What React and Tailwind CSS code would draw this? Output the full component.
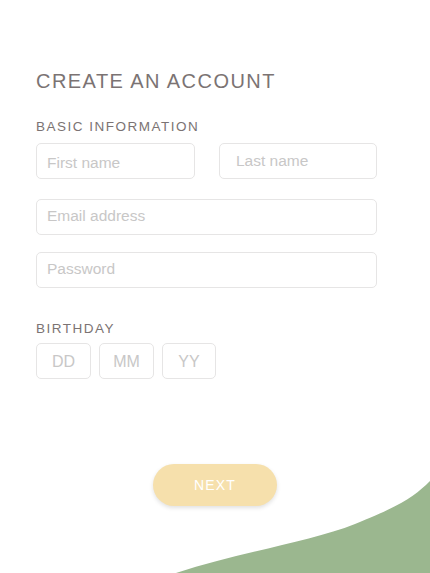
const Field = ({ placeholder, className = "" }) => {
  return (
    <div
      className={`h-[36px] rounded-[5px] border border-[#e6e5e5] bg-white flex items-center text-[#c8c7c7] ${className}`}
    >
      {placeholder}
    </div>
  );
};

const App = () => {
  return (
    <div
      className="relative w-[430px] h-[573px] overflow-hidden bg-white"
      style={{ fontFamily: '"Liberation Sans", Arial, sans-serif' }}
    >
      <div className="px-[36px] pt-[67px]">
        <h1 className="text-[20px] leading-[28px] tracking-[1.45px] text-[#7b7373]">
          CREATE AN ACCOUNT
        </h1>

        <h2 className="mt-[24px] text-[13.5px] leading-[16px] tracking-[1.5px] text-[#7b7373]">
          BASIC INFORMATION
        </h2>
        <div className="mt-[8px] flex gap-[24px] w-[341px]">
          <Field placeholder="First name" className="w-[159px] pl-[10px] pt-[3px] text-[15.5px]" />
          <Field placeholder="Last name" className="w-[158px] pl-[16px] text-[15.5px]" />
        </div>
        <Field placeholder="Email address" className="mt-[20px] w-[341px] pl-[10px] pb-[2px] text-[15.5px]" />
        <Field placeholder="Password" className="mt-[17px] w-[341px] pl-[10px] pb-[2px] text-[15.5px]" />

        <h2 className="mt-[33px] text-[13.5px] leading-[16px] tracking-[1.5px] text-[#7b7373]">
          BIRTHDAY
        </h2>
        <div className="mt-[6px] flex gap-[8px]">
          <Field placeholder="DD" className="w-[55px] justify-center pt-[1px] text-[16px]" />
          <Field placeholder="MM" className="w-[55px] justify-center pt-[1px] text-[16px]" />
          <Field placeholder="YY" className="w-[54px] justify-center pt-[1px] text-[16px]" />
        </div>

        <div className="mt-[85px] flex pl-[117px]">
          <button className="w-[124px] h-[42px] rounded-full bg-[#f6e0ac] text-white text-[14px] tracking-[1.2px] shadow-[0_2px_4px_rgba(0,0,0,0.12)]">
            NEXT
          </button>
        </div>
      </div>

      <svg
        className="absolute left-0 top-0 pointer-events-none"
        width="430"
        height="573"
        viewBox="0 0 430 573"
      >
        <path
          d="M176 573 C 240 552, 310 542, 355 524 S 415 496, 430 481 L 430 573 Z"
          fill="#9bb78f"
        />
      </svg>
    </div>
  );
};

export default App;
